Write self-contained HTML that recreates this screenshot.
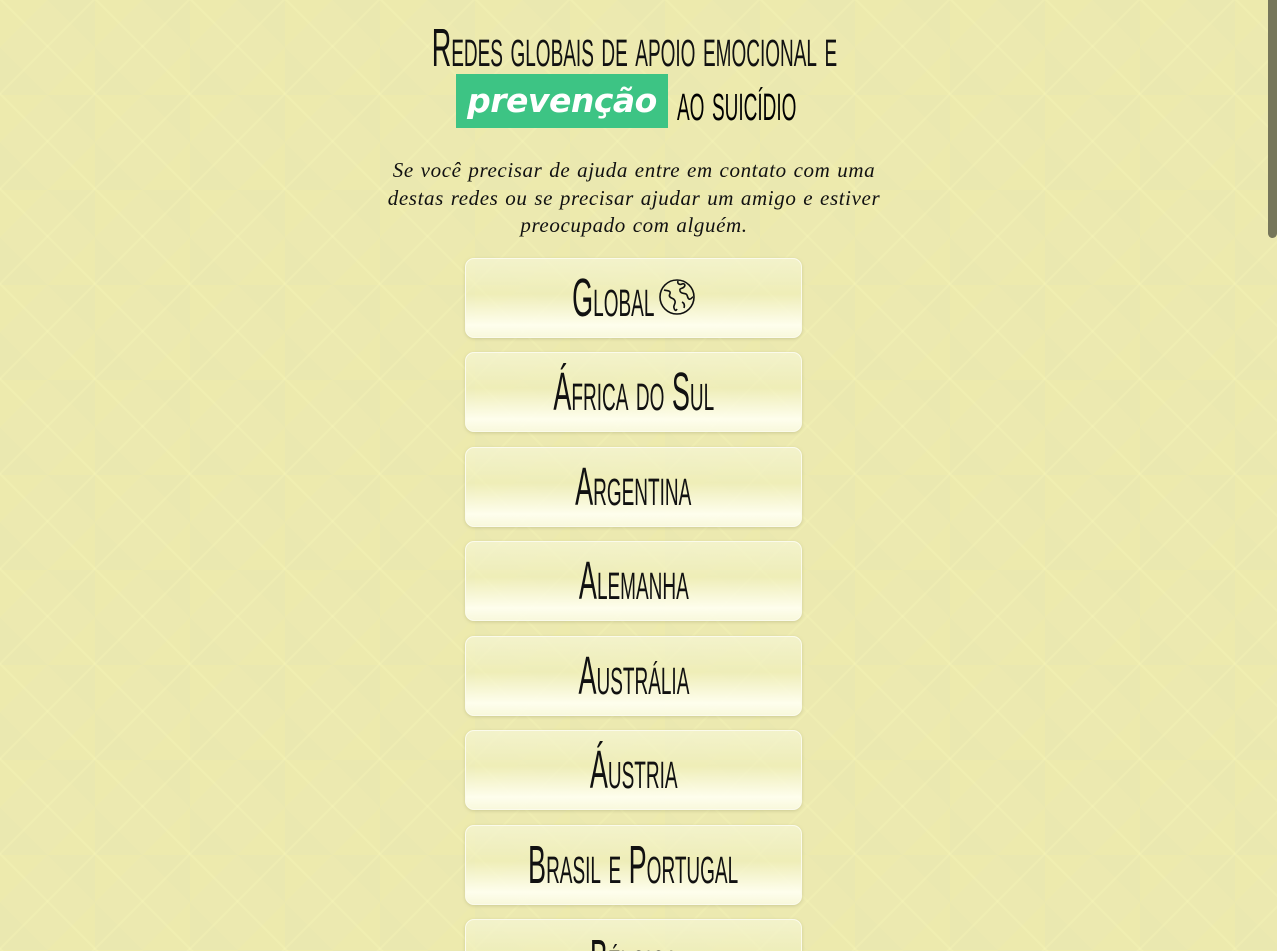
<!DOCTYPE html>
<html><head><meta charset="utf-8"><style>
html,body{margin:0;padding:0;width:1277px;height:951px;overflow:hidden;}
body{position:relative;font-family:"Liberation Sans",sans-serif;
background-color:#ece9b0;
background-image:
repeating-linear-gradient(45deg,rgba(255,255,190,.18) 0 2px,transparent 2px 67px),
repeating-linear-gradient(-45deg,rgba(255,255,190,.18) 0 2px,transparent 2px 67px),
linear-gradient(45deg,rgba(220,220,170,.12) 25%,transparent 25% 75%,rgba(220,220,170,.12) 75%),
linear-gradient(-45deg,rgba(240,240,160,.2) 25%,transparent 25% 75%,rgba(240,240,160,.2) 75%);
background-size:95px 95px,95px 95px,95px 95px,95px 95px;}
.sb{position:absolute;right:0;top:0;width:9px;height:238px;background:#76765a;border-radius:0 0 5px 5px;}
.t{position:absolute;left:0;width:1268px;text-align:center;color:#111;}
.cond{display:inline-block;transform:scaleX(.5);transform-origin:center;white-space:nowrap;font-variant:small-caps;margin:0 -300px;}
.h1{top:20px;font-size:54px;line-height:56px;}
.hl{position:absolute;left:456px;top:74px;width:212px;height:54px;background:#3dc484;}
.hlt{position:absolute;left:456px;top:74px;width:212px;height:54px;color:#fff;font-family:"DejaVu Sans",sans-serif;font-style:italic;font-weight:bold;font-size:33px;line-height:54px;text-align:center;letter-spacing:-.5px;}
.ao{position:absolute;left:677px;top:74px;font-size:54px;line-height:56px;}
.ao span{display:inline-block;transform:scaleX(.5);transform-origin:left;font-variant:small-caps;white-space:nowrap;}
.p{top:157px;font-family:"Liberation Serif",serif;font-style:italic;font-size:21px;line-height:27.5px;letter-spacing:.6px;word-spacing:1px;}
.b{position:absolute;left:465px;width:335px;height:78px;border:1px solid #fbfbec;border-radius:9px;
background:linear-gradient(180deg,rgba(245,245,210,.8) 0%,rgba(240,240,190,.6) 45%,rgba(255,255,240,.95) 85%,rgba(250,250,225,.9) 100%);
box-shadow:0 1px 3px rgba(150,150,100,.35);text-align:center;font-size:54px;line-height:78px;color:#111;}
.b span{display:inline-block;transform:scaleX(.5);font-variant:small-caps;white-space:nowrap;margin:0 -200px;}
.globe{position:absolute;left:192px;top:19px;}
</style></head><body>
<div class="sb"></div>
<div class="t h1"><span class="cond">Redes globais de apoio emocional e</span></div>
<div class="hl"></div><div class="hlt">prevenção</div>
<div class="ao"><span>ao suicídio</span></div>
<div class="t p">Se você precisar de ajuda entre em contato com uma<br>destas redes ou se precisar ajudar um amigo e estiver<br>preocupado com alguém.</div>
<div class="b" style="top:258px"><span style="position:relative;left:-20px">Global</span>
<svg class="globe" width="38" height="38" viewBox="0 0 38 38" fill="none" stroke="#111" stroke-width="1.6"><circle cx="19" cy="19" r="17"/><path d="M6 12c3 1 5 0 6 2s-2 3 0 5 4 1 5 4-2 4-1 7 2 3 3 1M20 3c-1 3 2 4 4 3s4 1 2 3-5 1-4 4 4 2 6 3 1 4 3 5 3-2 4-2M24 24c2 1 3 3 2 6"/></svg></div>
<div class="b" style="top:352px"><span>África do Sul</span></div>
<div class="b" style="top:447px"><span>Argentina</span></div>
<div class="b" style="top:541px"><span>Alemanha</span></div>
<div class="b" style="top:636px"><span>Austrália</span></div>
<div class="b" style="top:730px"><span>Áustria</span></div>
<div class="b" style="top:825px"><span>Brasil e Portugal</span></div>
<div class="b" style="top:919px"><span>Bélgica</span></div>
</body></html>
